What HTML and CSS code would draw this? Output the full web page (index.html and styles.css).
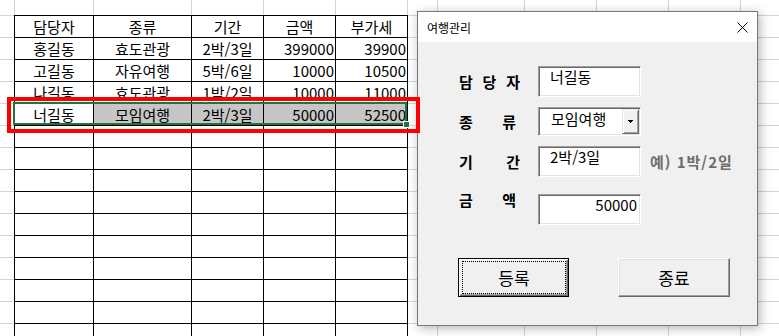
FILE: index.html
```html
<!DOCTYPE html>
<html lang="ko">
<head>
  <meta charset="UTF-8">
  <meta name="viewport" content="width=device-width, initial-scale=1.0">
  <title>여행관리</title>
  <link rel="stylesheet" href="styles.css">
</head>
<body>
  <!-- Worksheet -->
  <div class="sheet">
    <div class="grid">
      <div class="cell c">담당자</div><div class="cell c">종류</div><div class="cell c">기간</div><div class="cell c">금액</div><div class="cell c">부가세</div>
      <div class="cell c">홍길동</div><div class="cell c">효도관광</div><div class="cell c">2박/3일</div><div class="cell n">399000</div><div class="cell n">39900</div>
      <div class="cell c">고길동</div><div class="cell c">자유여행</div><div class="cell c">5박/6일</div><div class="cell n">10000</div><div class="cell n">10500</div>
      <div class="cell c">나길동</div><div class="cell c">효도관광</div><div class="cell c">1박/2일</div><div class="cell n">10000</div><div class="cell n">11000</div>
      <div class="cell c">너길동</div><div class="cell c sel">모임여행</div><div class="cell c sel">2박/3일</div><div class="cell n sel">50000</div><div class="cell n sel">52500</div>
      <!-- empty rows -->
      <div class="cell"></div><div class="cell"></div><div class="cell"></div><div class="cell"></div><div class="cell"></div>
      <div class="cell"></div><div class="cell"></div><div class="cell"></div><div class="cell"></div><div class="cell"></div>
      <div class="cell"></div><div class="cell"></div><div class="cell"></div><div class="cell"></div><div class="cell"></div>
      <div class="cell"></div><div class="cell"></div><div class="cell"></div><div class="cell"></div><div class="cell"></div>
      <div class="cell"></div><div class="cell"></div><div class="cell"></div><div class="cell"></div><div class="cell"></div>
      <div class="cell"></div><div class="cell"></div><div class="cell"></div><div class="cell"></div><div class="cell"></div>
      <div class="cell"></div><div class="cell"></div><div class="cell"></div><div class="cell"></div><div class="cell"></div>
      <div class="cell"></div><div class="cell"></div><div class="cell"></div><div class="cell"></div><div class="cell"></div>
      <div class="cell"></div><div class="cell"></div><div class="cell"></div><div class="cell"></div><div class="cell"></div>
      <div class="cell"></div><div class="cell"></div><div class="cell"></div><div class="cell"></div><div class="cell"></div>
    </div>
    <!-- selected range -->
    <div class="selection"><span class="handle"></span></div>
  </div>

  <!-- UserForm -->
  <div class="dialog">
    <div class="titlebar">
      <span>여행관리</span>
      <svg class="close" width="11" height="11" viewBox="0 0 11 11">
        <path d="M0.5 0.5L10.5 10.5M10.5 0.5L0.5 10.5" stroke="#000" stroke-width="1" fill="none"/>
      </svg>
    </div>
    <div class="form">
      <div class="field">
        <div class="label">담 당 자</div>
        <div class="box">너길동</div>
      </div>
      <div class="field combo-row">
        <div class="label short">종 류</div>
        <div class="box combo">
          <span class="combo-text">모임여행</span>
          <span class="drop">
            <svg width="5" height="3" viewBox="0 0 5 3" shape-rendering="crispEdges">
              <path d="M0 0h5v1H0zM1 1h3v1H1zM2 2h1v1H2z" fill="#000"/>
            </svg>
          </span>
        </div>
      </div>
      <div class="field period">
        <div class="label">기 간</div>
        <div class="box">2박/3일</div>
        <div class="hint">예) 1박/2일</div>
      </div>
      <div class="field amount">
        <div class="label short">금 액</div>
        <div class="box num">50000</div>
      </div>
      <div class="actions">
        <button class="btn default"><span class="focus">등록</span></button>
        <button class="btn">종료</button>
      </div>
    </div>
  </div>

  <!-- red highlight drawn over the screenshot -->
  <div class="mark"></div>
</body>
</html>
```

FILE: styles.css
```css
body {
  margin: 0;
  width: 779px;
  height: 336px;
  overflow: hidden;
  position: relative;
  background: #fff;
  font-family: "Noto Sans CJK KR", "Noto Sans", sans-serif;
  color: #000;
}

/* Worksheet with its grey gridlines */
.sheet {
  height: 336px;
  box-sizing: border-box;
  padding: 15px 0 0 14px;
  position: relative;
  background:
    linear-gradient(#d4d4d4, #d4d4d4) 14px 0 / 1px 100% no-repeat,
    linear-gradient(#d4d4d4, #d4d4d4) 93px 0 / 1px 100% no-repeat,
    linear-gradient(#d4d4d4, #d4d4d4) 191px 0 / 1px 100% no-repeat,
    linear-gradient(#d4d4d4, #d4d4d4) 263px 0 / 1px 100% no-repeat,
    linear-gradient(#d4d4d4, #d4d4d4) 335px 0 / 1px 100% no-repeat,
    linear-gradient(#d4d4d4, #d4d4d4) 407px 0 / 1px 100% no-repeat,
    linear-gradient(#d4d4d4, #d4d4d4) 437px 0 / 1px 100% no-repeat,
    linear-gradient(#d4d4d4, #d4d4d4) 524px 0 / 1px 100% no-repeat,
    linear-gradient(#d4d4d4, #d4d4d4) 596px 0 / 1px 100% no-repeat,
    linear-gradient(#d4d4d4, #d4d4d4) 668px 0 / 1px 100% no-repeat,
    linear-gradient(#d4d4d4, #d4d4d4) 740px 0 / 1px 100% no-repeat,
    repeating-linear-gradient(to bottom, transparent 0 15px, #d4d4d4 15px 16px, transparent 16px 22px);
}
.grid {
  display: grid;
  width: max-content;
  grid-template-columns: 78px 97px 71px 71px 71px;
  grid-auto-rows: 21px;
  gap: 1px;
  padding: 1px;
  background: #000; /* cell borders */
}
.cell {
  background: #fff;
  font-size: 15px;
  line-height: 21px;
  white-space: nowrap;
  overflow: hidden;
}
.c {
  text-align: center;
}
.n {
  text-align: right;
  padding-right: 1px;
}
.sel {
  background: #c6c6c6;
}
.selection {
  position: absolute;
  left: 13px;
  top: 102px;
  width: 394px;
  height: 23px;
  box-sizing: border-box;
  border: 2px solid #217346;
}
.handle {
  position: absolute;
  left: 388px;
  top: 17px;
  width: 7px;
  height: 7px;
  box-sizing: border-box;
  background: #217346;
  border: 1px solid #fff;
}

/* UserForm window */
.dialog {
  position: absolute;
  left: 417px;
  top: 11px;
  width: 341px;
  height: 315px;
  box-sizing: border-box;
  border: 1px solid #777;
  background: #f0f0f0;
  box-shadow: 2px 2px 10px rgba(0, 0, 0, 0.3);
}
.titlebar {
  height: 30px;
  display: flex;
  align-items: center;
  justify-content: space-between;
  padding: 0 9px;
  background: #fff;
  font-size: 12px;
}
.form {
  padding: 24px 0 0 41px;
}
.field {
  display: flex;
  align-items: center;
  height: 31px;
}
.label {
  width: 61px;
  margin-right: 18px;
  font-size: 15px;
  font-weight: bold;
  line-height: 18px;
  text-align: justify;
  text-align-last: justify;
}
.label.short {
  width: 57px;
  margin-right: 22px;
}
.box {
  width: 103px;
  height: 31px;
  box-sizing: border-box;
  background: #fff;
  border: 1px solid;
  border-color: #a0a0a0 #fff #fff #a0a0a0;
  box-shadow: inset 1px 1px #696969, inset -1px -1px #e3e3e3;
  padding: 1px 3px 0 11px;
  font-size: 15px;
  line-height: 18px;
  white-space: nowrap;
}
.num {
  text-align: right;
}
.combo-row {
  height: 29px;
  margin-top: 10px;
}
.combo {
  height: 29px;
  display: flex;
  padding: 1px;
}
.combo-text {
  flex: 1;
  padding: 1px 0 0 11px;
}
.drop {
  width: 17px;
  box-sizing: border-box;
  display: flex;
  align-items: center;
  justify-content: center;
  background: #f0f0f0;
  border: 1px solid;
  border-color: #e3e3e3 #696969 #696969 #e3e3e3;
  box-shadow: inset 1px 1px #fff, inset -1px -1px #a0a0a0;
}
.period {
  margin-top: 10px;
}
.hint {
  margin-left: 9px;
  font-size: 15px;
  font-weight: bold;
  letter-spacing: 1px;
  color: #6d6d6d;
  white-space: nowrap;
}
.amount {
  margin-top: 17px;
  align-items: flex-start;
}
.amount .label {
  margin-top: -3px;
}
.actions {
  display: flex;
  gap: 49px;
  margin: 33px 0 0 -1px;
}
.btn {
  width: 112px;
  height: 39px;
  box-sizing: border-box;
  padding: 0;
  background: #f0f0f0;
  border: 1px solid;
  border-color: #fff #696969 #696969 #fff;
  box-shadow: inset -1px -1px #a0a0a0, inset 1px 1px #e3e3e3;
  font-family: "Noto Sans CJK KR", sans-serif;
  font-size: 17px;
  color: #000;
}
.btn.default {
  width: 111px;
  border-color: #000;
  box-shadow: inset 1px 1px #fff, inset -1px -1px #696969, inset -2px -2px #a0a0a0;
  padding: 2px 2px 2px 3px;
}
.focus {
  display: flex;
  align-items: center;
  justify-content: center;
  height: 100%;
  box-sizing: border-box;
  border: 1px dotted #000;
}

/* red annotation box */
.mark {
  position: absolute;
  left: 7px;
  top: 97px;
  width: 413px;
  height: 36px;
  box-sizing: border-box;
  border: 4px solid #f00;
}
```
